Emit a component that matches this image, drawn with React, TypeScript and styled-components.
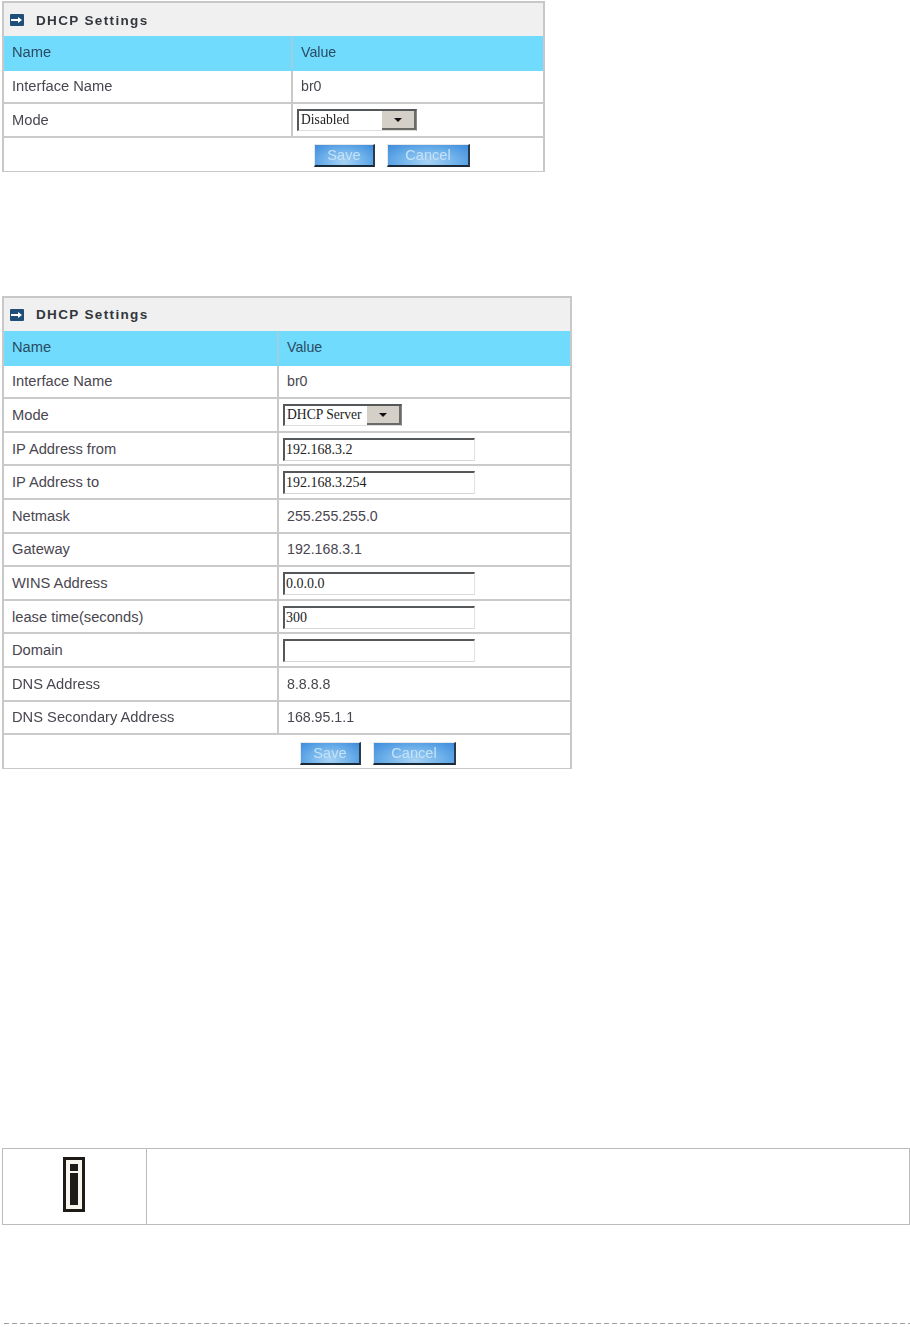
import React from 'react';
import styled, { createGlobalStyle } from 'styled-components';

const GlobalStyle = createGlobalStyle`
  html, body {
    margin: 0;
    padding: 0;
    background: #fff;
  }
  body {
    font-family: "Liberation Sans", Arial, sans-serif;
  }
`;

const Page = styled.div`
  width: 910px;
  height: 1327px;
  box-sizing: border-box;
  padding: 1px 0 0 2px;
  display: flex;
  flex-direction: column;
  overflow: hidden;
`;

const Panel = styled.section<{ $width: number; $gap: number }>`
  width: ${p => p.$width}px;
  box-sizing: border-box;
  border: 2px solid #c8c8c8;
  border-bottom-width: 1px;
  margin-bottom: ${p => p.$gap}px;
  filter: blur(0.35px);
`;

const TitleBar = styled.div`
  height: 33px;
  box-sizing: border-box;
  padding: 1px 0 0 6px;
  display: flex;
  align-items: center;
  gap: 12px;
  background: #f0f0f0;
`;

const TitleText = styled.h2`
  margin: 0;
  font-size: 13.5px;
  font-weight: 700;
  letter-spacing: 1.35px;
  color: #33363c;
`;

const Row = styled.div<{ $first: number; $header?: boolean }>`
  display: grid;
  grid-template-columns: ${p => p.$first}px 1fr;
  height: ${p => (p.$header ? 34.6 : 33.6)}px;
  box-sizing: border-box;
  background: ${p => (p.$header ? '#70dbfd' : '#fff')};
  border-bottom: 2px solid ${p => (p.$header ? '#70dbfd' : '#cacaca')};
  color: ${p => (p.$header ? '#2b4a63' : '#4a4650')};
`;

const Cell = styled.div`
  display: flex;
  align-items: center;
  padding-left: 8px;
  white-space: nowrap;
  font-size: 14.7px;
`;

const ValueCell = styled.div<{ $header?: boolean }>`
  display: flex;
  align-items: center;
  padding-left: 4px;
  border-left: 2px solid ${p => (p.$header ? '#9ccfe0' : '#cacaca')};
  white-space: nowrap;
  font-size: 14.2px;
`;

const ValueText = styled.span`
  margin-left: 4px;
`;

const ButtonRow = styled.div<{ $first: number }>`
  height: 33.4px;
  box-sizing: border-box;
  padding: 3px 0 0 ${p => p.$first}px;
  display: flex;
  align-items: center;
  gap: 12px;
`;

const BlueButton = styled.button<{ $width: number }>`
  width: ${p => p.$width}px;
  height: 23px;
  padding: 0;
  border-style: solid;
  border-width: 1px 2px 2px 1px;
  border-color: #e8e8e8 #2a3a48 #1c2a38 #e8e8e8;
  background: radial-gradient(ellipse at 50% 85%, #a6d2f4 0%, #6aaee9 55%, #3d8bdc 100%);
  color: #c4e2f8;
  font-family: inherit;
  font-size: 14.6px;
`;

const SelectBox = styled.div<{ $width: number }>`
  width: ${p => p.$width}px;
  height: 22px;
  margin-top: 1px;
  box-sizing: border-box;
  display: flex;
  align-items: stretch;
  border-style: solid;
  border-width: 2px 1px 1px 2px;
  border-color: #55585a #8a8a88 #ddd #55585a;
  background: #fff;
  font-family: "Liberation Serif", "Times New Roman", serif;
  font-size: 13.6px;
  color: #222;
`;

const SelectText = styled.span`
  flex: 1;
  padding-left: 2px;
  line-height: 18px;
`;

const SelectArrow = styled.span`
  width: 34px;
  box-sizing: border-box;
  padding-top: 1px;
  display: flex;
  align-items: center;
  justify-content: center;
  background: #d4d0c8;
  border-right: 2px solid #6a6a66;
  border-bottom: 2px solid #6a6a66;

  &::after {
    content: '';
    border-style: solid;
    border-width: 4px 4px 0 4px;
    border-color: #111 transparent transparent transparent;
  }
`;

const TextBox = styled.input`
  width: 192px;
  height: 23px;
  margin: 1px 0 0;
  box-sizing: border-box;
  padding: 0 0 0 1px;
  border-style: solid;
  border-width: 2px 1px 1px 2px;
  border-color: #55585a #e2e2e2 #d8d8d8 #55585a;
  background: #fff;
  font-family: "Liberation Serif", "Times New Roman", serif;
  font-size: 14px;
  color: #222;
  outline: none;
`;

const NoteTable = styled.div`
  width: 908px;
  height: 77px;
  box-sizing: border-box;
  display: grid;
  grid-template-columns: 144px 1fr;
  border: 1px solid #bcbcbc;
`;

const NoteIcon = styled.div`
  padding: 0 2px 4px 0;
  display: flex;
  align-items: center;
  justify-content: center;
  border-right: 1px solid #bcbcbc;
`;

const NoteBody = styled.div``;

const Dashed = styled.div`
  width: 906px;
  height: 1px;
  margin: 98px 0 0 2px;
  background: repeating-linear-gradient(90deg, #a0a0a0 0 5px, transparent 5px 8px);
`;

const PanelIcon = () => (
  <svg width="14" height="12" viewBox="0 0 14 12" aria-hidden="true">
    <rect width="14" height="12" rx="1" fill="#1f4e79" />
    <path d="M1 5h7V3l4 3-4 3V7H1z" fill="#fff" />
  </svg>
);

const InfoIcon = () => (
  <svg width="22" height="55" viewBox="0 0 22 55" aria-hidden="true">
    <rect x="1.5" y="1.5" width="19" height="52" fill="#f8f6ec" stroke="#1d1a18" strokeWidth="3" />
    <rect x="7" y="7" width="8" height="7" fill="#1d1a18" />
    <rect x="7" y="16" width="8" height="32" fill="#1d1a18" />
  </svg>
);

const Select = ({ value, width }: { value: string; width: number }) => (
  <SelectBox $width={width}>
    <SelectText>{value}</SelectText>
    <SelectArrow />
  </SelectBox>
);

type RowData = { name: string; text?: string; select?: string; input?: string };

const SettingsPanel = ({
  first,
  width,
  gap,
  selectWidth,
  rows,
  buttonsAt,
}: {
  first: number;
  width: number;
  gap: number;
  selectWidth: number;
  rows: RowData[];
  buttonsAt: number;
}) => (
  <Panel $width={width} $gap={gap}>
    <TitleBar>
      <PanelIcon />
      <TitleText>DHCP Settings</TitleText>
    </TitleBar>
    <Row $first={first} $header>
      <Cell>Name</Cell>
      <ValueCell $header><ValueText>Value</ValueText></ValueCell>
    </Row>
    {rows.map(r => (
      <Row $first={first} key={r.name}>
        <Cell>{r.name}</Cell>
        <ValueCell>
          {r.text && <ValueText>{r.text}</ValueText>}
          {r.select && <Select value={r.select} width={selectWidth} />}
          {r.input !== undefined && <TextBox readOnly value={r.input} />}
        </ValueCell>
      </Row>
    ))}
    <ButtonRow $first={buttonsAt}>
      <BlueButton $width={61}>Save</BlueButton>
      <BlueButton $width={83}>Cancel</BlueButton>
    </ButtonRow>
  </Panel>
);

const shortRows: RowData[] = [
  { name: 'Interface Name', text: 'br0' },
  { name: 'Mode', select: 'Disabled' },
];

const longRows: RowData[] = [
  { name: 'Interface Name', text: 'br0' },
  { name: 'Mode', select: 'DHCP Server' },
  { name: 'IP Address from', input: '192.168.3.2' },
  { name: 'IP Address to', input: '192.168.3.254' },
  { name: 'Netmask', text: '255.255.255.0' },
  { name: 'Gateway', text: '192.168.3.1' },
  { name: 'WINS Address', input: '0.0.0.0' },
  { name: 'lease time(seconds)', input: '300' },
  { name: 'Domain', input: '' },
  { name: 'DNS Address', text: '8.8.8.8' },
  { name: 'DNS Secondary Address', text: '168.95.1.1' },
];

export default function App() {
  return (
    <Page>
      <GlobalStyle />
      <SettingsPanel first={287} width={543} gap={123.8} selectWidth={120} rows={shortRows} buttonsAt={310} />
      <SettingsPanel first={273} width={570} gap={378.4} selectWidth={119} rows={longRows} buttonsAt={296} />
      <NoteTable>
        <NoteIcon><InfoIcon /></NoteIcon>
        <NoteBody />
      </NoteTable>
      <Dashed />
    </Page>
  );
}
